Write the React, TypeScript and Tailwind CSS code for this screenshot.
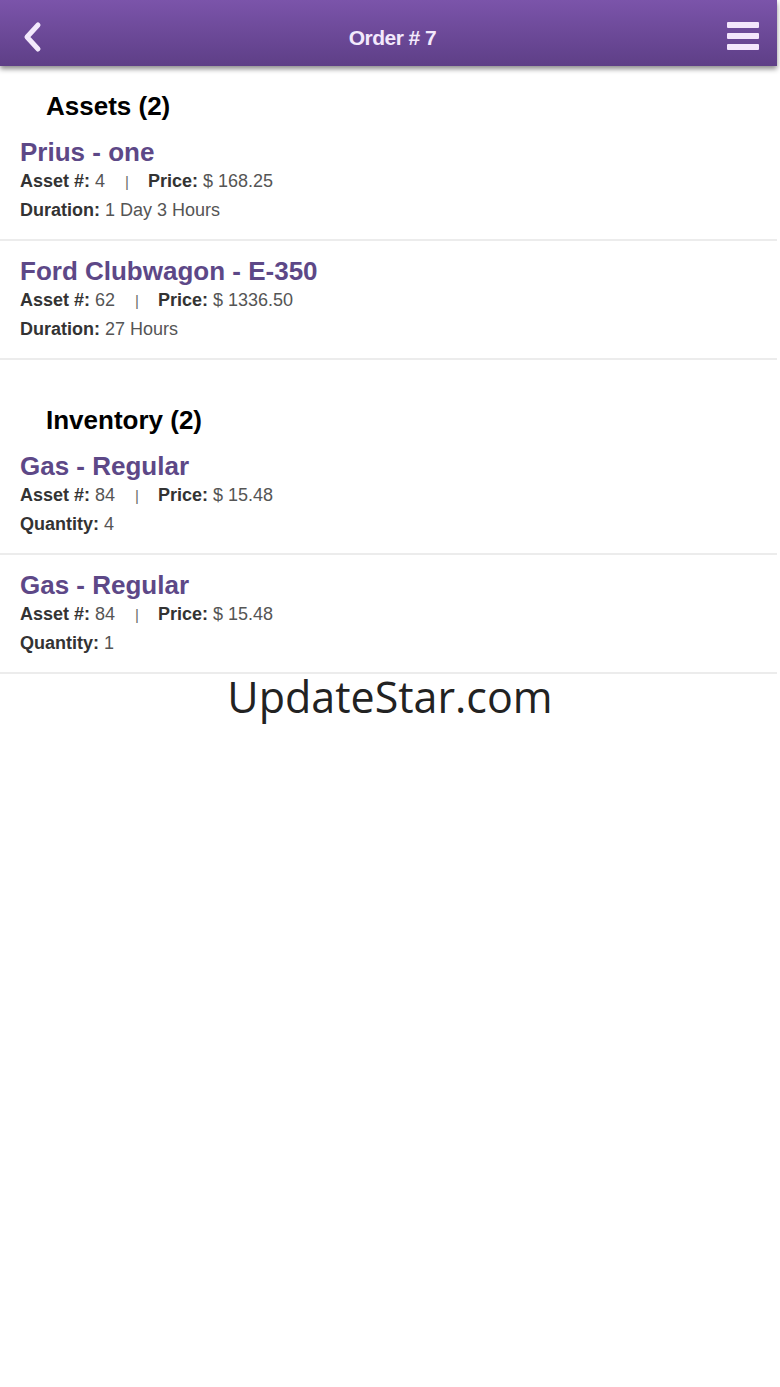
import React from "react";

type Line = { label: string; value: string };
type Item = { title: string; assetNo: string; price: string; extra: Line };

const assets: Item[] = [
  { title: "Prius - one", assetNo: "4", price: "$ 168.25", extra: { label: "Duration:", value: "1 Day 3 Hours" } },
  { title: "Ford Clubwagon - E-350", assetNo: "62", price: "$ 1336.50", extra: { label: "Duration:", value: "27 Hours" } },
];

const inventory: Item[] = [
  { title: "Gas - Regular", assetNo: "84", price: "$ 15.48", extra: { label: "Quantity:", value: "4" } },
  { title: "Gas - Regular", assetNo: "84", price: "$ 15.48", extra: { label: "Quantity:", value: "1" } },
];

function OrderItem({ item, first }: { item: Item; first?: boolean }) {
  return (
    <div className={`pl-5 ${first ? "pt-4" : "pt-[15px]"} pb-[14px] border-b-2 border-[#ececec]`}>
      <div className="text-[26px] leading-[30px] font-bold text-[#5d4887]">{item.title}</div>
      <div className="text-[18px] leading-[29px] text-[#555]">
        <span className="font-bold text-[#333]">Asset #:</span> {item.assetNo}
        <span className="ml-5 mr-[19px] text-[#6b6b6b] text-[15px]">|</span>
        <span className="font-bold text-[#333]">Price:</span> {item.price}
      </div>
      <div className="text-[18px] leading-[29px] text-[#555]">
        <span className="font-bold text-[#333]">{item.extra.label}</span> {item.extra.value}
      </div>
    </div>
  );
}

function Section({ title, items }: { title: string; items: Item[] }) {
  return (
    <section>
      <h2 className="pl-[46px] text-[26px] leading-[30px] font-bold text-black">{title}</h2>
      {items.map((it, i) => (
        <OrderItem key={i} item={it} first={i === 0} />
      ))}
    </section>
  );
}

export default function App() {
  return (
    <div className="min-h-[1387px] bg-white font-['Liberation_Sans',Arial,sans-serif]">
      <div className="w-[777px]">
        {/* Top bar */}
        <header className="relative h-[66px] bg-gradient-to-b from-[#7b54aa] to-[#5e3f87] shadow-[0_3px_5px_rgba(0,0,0,0.45)] flex items-center justify-between px-[22px]">
          <button className="mt-[8px] w-[20px] h-[32px] flex items-center">
            <svg width="20" height="32" viewBox="0 0 20 32">
              <path d="M16 4 L5 16 L16 28" fill="none" stroke="#f3e9fc" strokeWidth="5" strokeLinecap="round" strokeLinejoin="round" />
            </svg>
          </button>
          <h1 className="absolute inset-0 flex items-center justify-center pl-2 pt-[10px] text-[21px] font-bold tracking-tight text-[#f3e9fc] pointer-events-none">
            Order # 7
          </h1>
          <button className="mt-[6px] flex flex-col gap-[5px] mr-[-4px]">
            <span className="block w-[32px] h-[6px] rounded-[1px] bg-[#f3e6fc]" />
            <span className="block w-[32px] h-[6px] rounded-[1px] bg-[#f3e6fc]" />
            <span className="block w-[32px] h-[6px] rounded-[1px] bg-[#f3e6fc]" />
          </button>
        </header>

        <main className="pt-[25px]">
          <Section title="Assets (2)" items={assets} />
          <div className="h-[45px]" />
          <Section title="Inventory (2)" items={inventory} />
        </main>
      </div>

      <div className="w-[780px] text-center text-[43px] leading-[46px] text-[#222] font-['Open_Sans',sans-serif]">
        UpdateStar.com
      </div>
    </div>
  );
}
